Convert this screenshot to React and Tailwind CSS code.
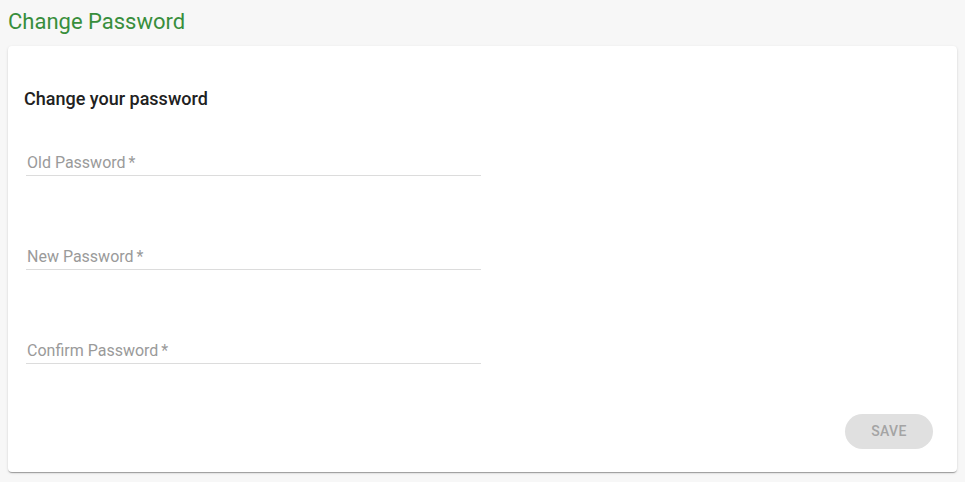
export default function App() {
  const fields = ["Old Password", "New Password", "Confirm Password"];

  return (
    <div className="min-h-[482px] bg-[#f7f7f7] px-2 pt-2 pb-[11px] font-['Roboto',sans-serif]">
      <h1 className="text-[22px] leading-[28px] text-[#388e3c]">Change Password</h1>

      <div className="mt-[10px] rounded bg-white px-4 pt-[41px] pb-[23px] shadow-[0_2px_1px_-1px_rgba(0,0,0,0.2),0_1px_1px_0_rgba(0,0,0,0.14),0_1px_3px_0_rgba(0,0,0,0.12)]">
        <h2 className="text-[18px] leading-6 font-medium text-[#212121]">Change your password</h2>

        <div className="mt-[40px] flex flex-col gap-[69px] pl-[2px]">
          {fields.map((f) => (
            <label key={f} className="block w-[455px] border-b border-[#dcdcdc] pl-px text-[16px] leading-6 text-[#9a9a9a]">
              {f}
              <span className="ml-[3px]">*</span>
            </label>
          ))}
        </div>

        <div className="mt-[50px] flex justify-end pr-2">
          <button className="h-[35px] w-[88px] rounded-full bg-[#e0e0e0] text-[14px] font-medium tracking-[0.4px] text-[#a4a4a4]">
            SAVE
          </button>
        </div>
      </div>
    </div>
  );
}
